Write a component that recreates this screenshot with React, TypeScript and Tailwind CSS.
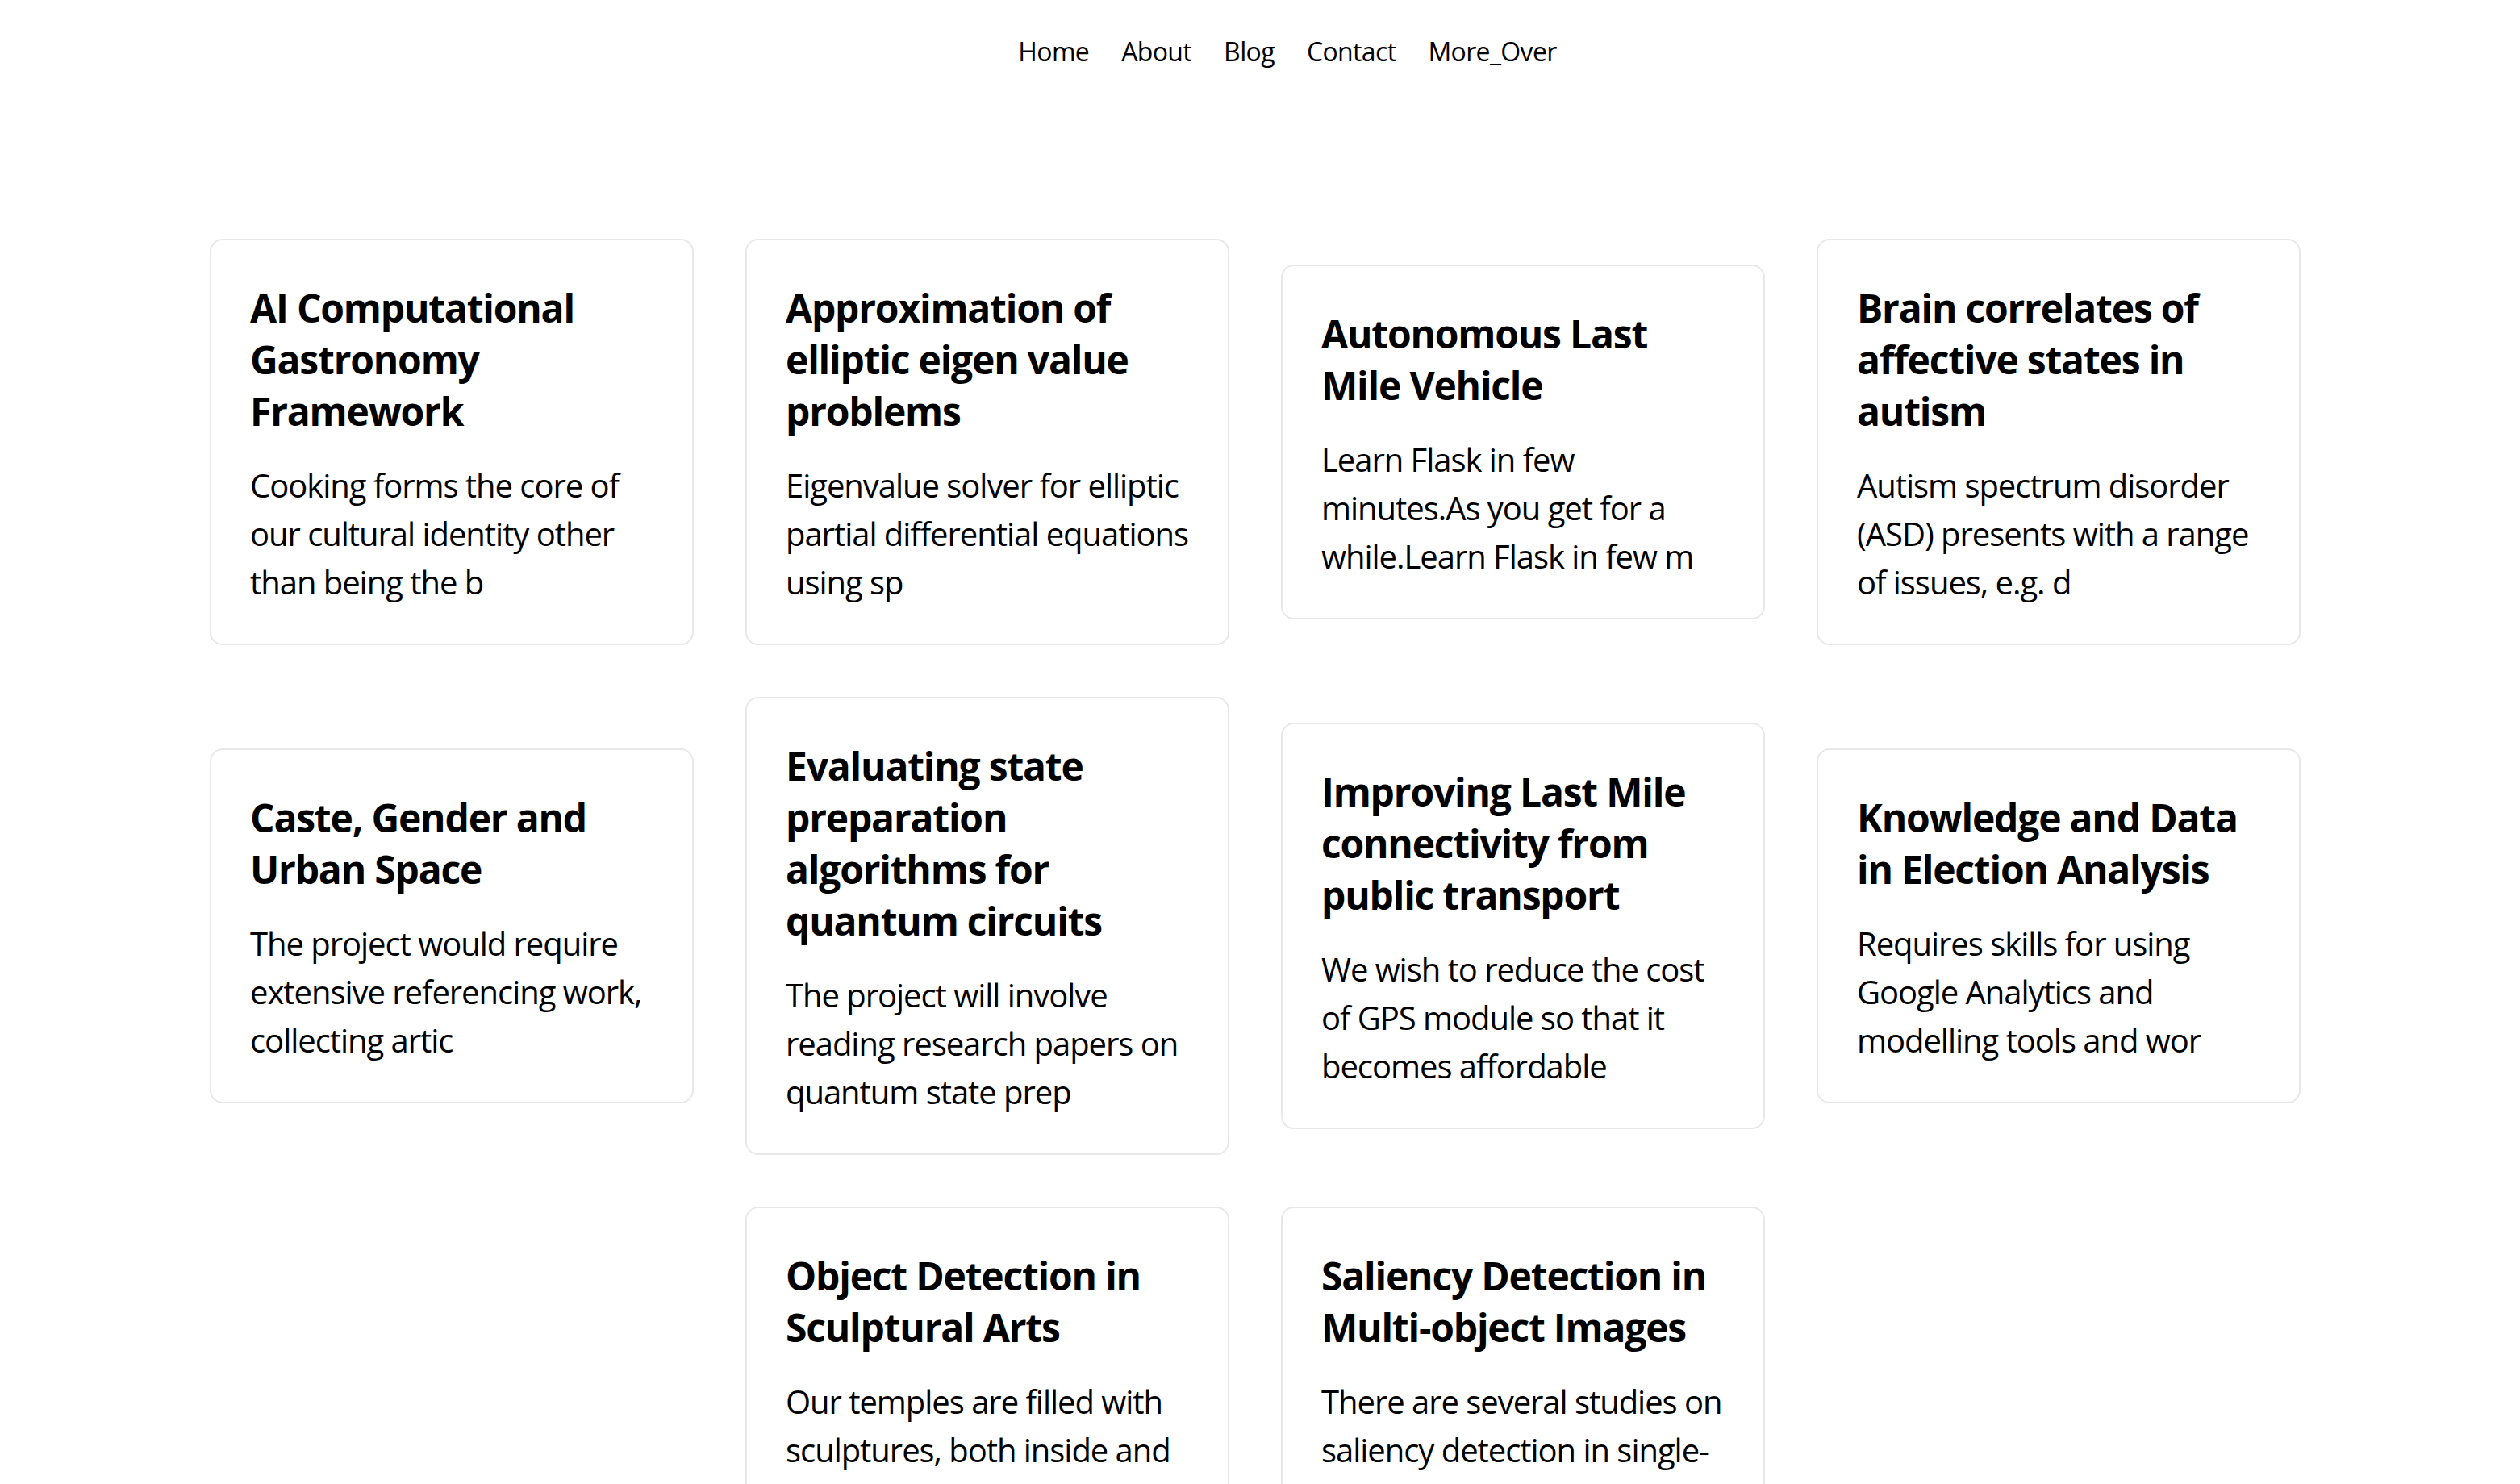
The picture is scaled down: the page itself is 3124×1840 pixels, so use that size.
const links = ["Home", "About", "Blog", "Contact", "More_Over"];

interface Project {
  title: string;
  summary: string;
}

// lines are split by hand so the wrapping matches the original layout
const projects: Project[] = [
  {
    title: "AI Computational\nGastronomy\nFramework",
    summary: "Cooking forms the core of\nour cultural identity other\nthan being the b",
  },
  {
    title: "Approximation of\nelliptic eigen value\nproblems",
    summary: "Eigenvalue solver for elliptic\npartial differential equations\nusing sp",
  },
  {
    title: "Autonomous Last\nMile Vehicle",
    summary: "Learn Flask in few\nminutes.As you get for a\nwhile.Learn Flask in few m",
  },
  {
    title: "Brain correlates of\naffective states in\nautism",
    summary: "Autism spectrum disorder\n(ASD) presents with a range\nof issues, e.g. d",
  },
  {
    title: "Caste, Gender and\nUrban Space",
    summary: "The project would require\nextensive referencing work,\ncollecting artic",
  },
  {
    title: "Evaluating state\npreparation\nalgorithms for\nquantum circuits",
    summary: "The project will involve\nreading research papers on\nquantum state prep",
  },
  {
    title: "Improving Last Mile\nconnectivity from\npublic transport",
    summary: "We wish to reduce the cost\nof GPS module so that it\nbecomes affordable",
  },
  {
    title: "Knowledge and Data\nin Election Analysis",
    summary: "Requires skills for using\nGoogle Analytics and\nmodelling tools and wor",
  },
  {
    title: "Object Detection in\nSculptural Arts",
    summary: "Our temples are filled with\nsculptures, both inside and\noutside. These",
  },
  {
    title: "Saliency Detection in\nMulti-object Images",
    summary: "There are several studies on\nsaliency detection in single-\nobject image",
  },
];

function ProjectCard({ project }: { project: Project }) {
  return (
    <div className="w-[600px] bg-white border-2 border-[#e8e8e8] rounded-2xl px-12 pt-[52px] pb-[46px]">
      <h3 className="text-[48px] leading-[64px] font-bold tracking-[-0.025em] whitespace-pre mb-[30px]">
        {project.title}
      </h3>
      <p className="text-[40px] leading-[60px] tracking-[-0.026em] whitespace-pre">
        {project.summary}
      </p>
    </div>
  );
}

export default function App() {
  return (
    <div className="min-h-screen bg-white text-black pr-3 font-['Open_Sans',sans-serif]">
      <nav className="pt-10">
        <ul className="flex justify-center gap-10 pl-20 text-[32px] leading-[48px] tracking-[-0.02em]">
          {links.map((link) => (
            <li key={link}>
              <a href="#">{link}</a>
            </li>
          ))}
        </ul>
      </nav>

      <main className="w-[2600px] mx-auto mt-[208px] flex flex-wrap justify-center items-center gap-16 pb-16">
        {projects.map((p) => (
          <ProjectCard key={p.title} project={p} />
        ))}
      </main>
    </div>
  );
}
